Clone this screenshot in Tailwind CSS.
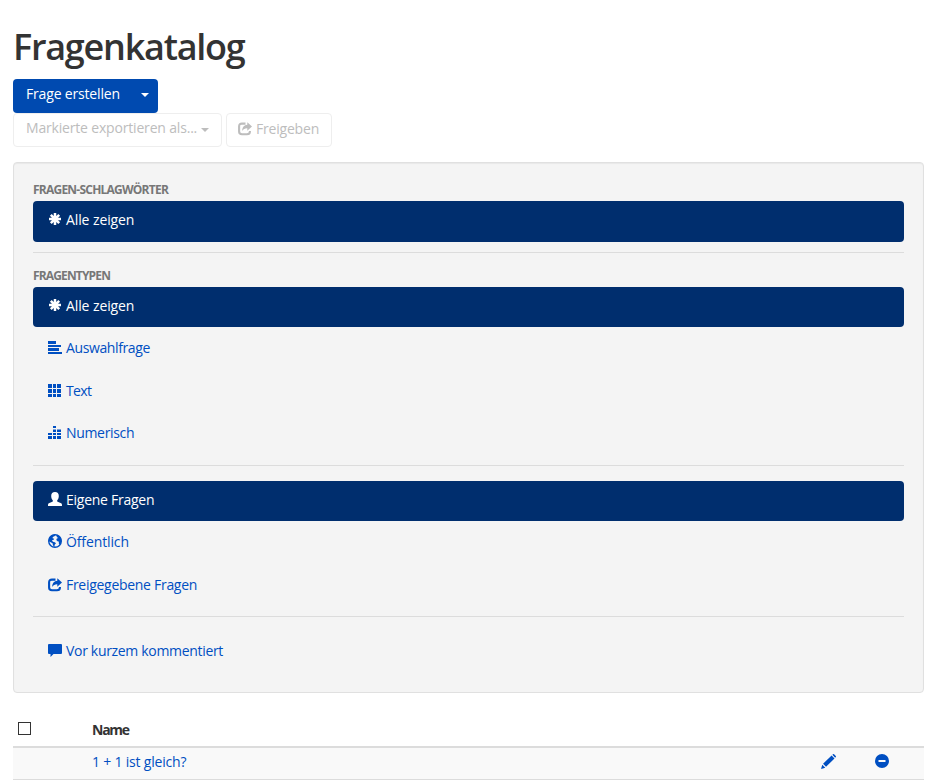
<!DOCTYPE html>
<html lang="de">
<head>
<meta charset="utf-8">
<title>Fragenkatalog</title>
<script src="https://cdn.jsdelivr.net/npm/@tailwindcss/browser@4"></script>
</head>
<body class="h-[784px] overflow-hidden bg-white pl-[13px] pr-[15px] font-['Open_Sans',sans-serif] text-sm leading-5 text-[#333]">
<svg class="hidden">
  <symbol id="asterisk" viewBox="0 0 14 14"><path stroke="currentColor" stroke-width="2.5" d="M7 1v12M1 7h12M2.8 2.8l8.4 8.4M11.200 2.8l-8.400 8.4"/></symbol>
  <symbol id="share" viewBox="0 0 14 14"><path fill="none" stroke="currentColor" stroke-width="2.100" d="M7.500 1.600H4Q1.100 1.600 1.100 4.500v5Q1.100 12.200 4 12.200h5Q11.900 12.200 11.900 9.700V9"/><path fill="currentColor" d="M9.300.3 14 4.500 9.300 8.700V6.300C7 6.200 5.400 7 4.200 9 4.200 5.500 6 3 9.300 2.800z"/></symbol>
  <symbol id="left" viewBox="0 0 14 14"><path fill="currentColor" d="M0 0h8v3H0zM0 4h13v2H0zM0 7h11v3H0zM0 11h14v2H0z"/></symbol>
  <symbol id="grid" viewBox="0 0 14 14"><path fill="currentColor" d="M0 0h4v4H0zM5 0h3v4H5zM9 0h4v4H9zM0 5h4v4H0zM5 5h3v4H5zM9 5h4v4H9zM0 10h4v3H0zM5 10h3v3H5zM9 10h4v3H9z"/></symbol>
  <symbol id="equalizer" viewBox="0 0 14 14"><path fill="currentColor" d="M5 0h3v2H5zM5 3.500h3v2.500H5zM5 7h3v2H5zM5 10h3v3H5zM0 7h4v2H0zM0 10h4v3H0zM9 3.500h4v2.500H9zM9 7h4v2H9zM9 10h4v3H9z"/></symbol>
  <symbol id="user" viewBox="0 0 14 14"><path fill="currentColor" d="M7 0C9.500 0 10.800 1.600 10.800 4c0 1.700-.6 3.300-1.600 4.300v1.200c1 .9 3.500 1.300 4.300 2 .4.400.5 1 .5 2.500H0c0-1.500.1-2.100.5-2.500.8-.7 3.300-1.100 4.300-2V8.300C3.800 7.300 3.200 5.700 3.200 4 3.200 1.600 4.500 0 7 0z"/></symbol>
  <symbol id="globe" viewBox="0 0 14 14"><circle cx="7" cy="7" r="6.300" fill="none" stroke="currentColor" stroke-width="1.400"/><path fill="currentColor" d="M.6 7C.6 3 3.500.6 7.500.6L6.500 2.300 4.800 3 4.600 4.200 6.200 4.800 5.600 5.800 3.800 6.600 5 7.700 6.800 8.200 8 9.300 6.700 10.800 6.400 13.300C5 12 4.800 10.300 4.400 9 3.500 8.800 2 8 .6 7zM9 .8l2.500 1.400L13.400 5l-.2 3.200-1.500 2.600-1-1.500.3-1.600L9.500 7.300 8.300 6l.5-1.600L10.300 4 8.600 3z"/></symbol>
  <symbol id="comment" viewBox="0 0 14 14"><path fill="currentColor" d="M1 0h12a1 1 0 0 1 1 1v8a1 1 0 0 1-1 1H5.500L2.500 13V10H1a1 1 0 0 1-1-1V1a1 1 0 0 1 1-1z"/></symbol>
  <symbol id="pencil" viewBox="0 0 14 14"><path fill="currentColor" d="m0 14 1.200-4 2.800 2.800zM1.900 9.200 9.900 1.400l2.700 2.700-7.900 7.900zM10.600.8l.6-.6q.5-.4 1 0l1.600 1.600q.4.500 0 1l-.6.600z"/></symbol>
  <symbol id="minus" viewBox="0 0 14 14"><path fill="currentColor" fill-rule="evenodd" d="M7 0a7 7 0 1 1 0 14A7 7 0 0 1 7 0zM3.500 6v2h7V6z"/></symbol>
</svg>

<h1 class="h-[79px] pt-[27px] text-[36px] leading-10 font-semibold tracking-[-1.25px]">Fragenkatalog</h1>

<div class="flex h-[34px] w-[145px] items-start rounded-[4px] bg-[#004ab0] pt-[5px] pl-[13px] text-white">
  <span class="w-[115px] tracking-[-0.17px]">Frage erstellen</span>
  <span class="mt-[9px] border-x-4 border-t-4 border-x-transparent border-t-white"></span>
</div>
<div class="flex gap-1 text-[#bdbdbd]">
  <div class="flex h-[34px] w-[209px] items-start rounded-[4px] border border-[#eee] pt-1 pl-3">
    <span class="w-[175px] whitespace-nowrap tracking-[-0.18px]">Markierte exportieren als...</span>
    <span class="mt-[10px] border-x-4 border-t-4 border-x-transparent border-t-[#bdbdbd]"></span>
  </div>
  <div class="flex h-[34px] w-[106px] items-start gap-1 rounded-[4px] border border-[#eee] pt-[5px] pl-[11px]">
    <svg class="mt-[3px] size-3.5"><use href="#share"/></svg><span class="tracking-[-0.2px]">Freigeben</span>
  </div>
</div>

<aside class="mt-[15px] h-[531px] rounded-[4px] border border-[#e0e0e0] bg-[#f4f4f4] px-[19px] pt-[17px] text-[#004fc2] shadow-[inset_0_1px_1px_rgba(0,0,0,0.05)]">
  <h2 class="h-[21px] text-xs leading-5 font-bold tracking-[-0.77px] text-[#777]">FRAGEN-SCHLAGWÖRTER</h2>
  <a class="flex h-[41px] items-start gap-1 rounded-[4px] bg-[#002e6e] pt-[9px] pl-[15px] text-white"><svg class="mt-[2px] size-3.5"><use href="#asterisk"/></svg><span class="tracking-[-0.1px]">Alle zeigen</span></a>
  <div class="mt-[10px] h-px bg-[#dcdcdc]"></div>
  <h2 class="mt-[13px] h-[21px] text-xs leading-5 font-bold tracking-[-0.85px] text-[#777]">FRAGENTYPEN</h2>
  <a class="flex h-10 items-start gap-1 rounded-[4px] bg-[#002e6e] pt-[9px] pl-[15px] text-white"><svg class="mt-[2px] size-3.5"><use href="#asterisk"/></svg><span class="tracking-[-0.1px]">Alle zeigen</span></a>
  <a class="flex h-[43px] items-start gap-1 pt-[11px] pl-[15px]"><svg class="mt-[3px] size-3.5"><use href="#left"/></svg><span class="tracking-[-0.38px]">Auswahlfrage</span></a>
  <a class="flex h-[42px] items-start gap-1 pt-[11px] pl-[15px]"><svg class="mt-[3px] size-3.5"><use href="#grid"/></svg><span class="tracking-[-0.6px]">Text</span></a>
  <a class="flex h-[43px] items-start gap-1 pt-[11px] pl-[15px]"><svg class="mt-[3px] size-3.5"><use href="#equalizer"/></svg><span class="tracking-[-0.33px]">Numerisch</span></a>
  <div class="mt-[10px] h-px bg-[#dcdcdc]"></div>
  <a class="mt-[15px] flex h-10 items-start gap-1 rounded-[4px] bg-[#002e6e] pt-[9px] pl-[15px] text-white"><svg class="mt-[2px] size-3.5"><use href="#user"/></svg><span class="tracking-[-0.26px]">Eigene Fragen</span></a>
  <a class="flex h-[43px] items-start gap-1 pt-[11px] pl-[15px]"><svg class="mt-[2px] size-3.5"><use href="#globe"/></svg><span class="tracking-[-0.12px]">Öffentlich</span></a>
  <a class="flex h-[42px] items-start gap-1 pt-[11px] pl-[15px]"><svg class="mt-[3px] size-3.5"><use href="#share"/></svg><span class="tracking-[-0.29px]">Freigegebene Fragen</span></a>
  <div class="mt-[10px] h-px bg-[#dcdcdc]"></div>
  <a class="mt-[15px] flex h-10 items-start gap-1 pt-[9px] pl-[15px]"><svg class="mt-[3px] size-3.5"><use href="#comment"/></svg><span class="tracking-[-0.32px]">Vor kurzem kommentiert</span></a>
</aside>

<div class="flex h-[55px] items-start border-b-2 border-[#dcdcdc] pl-[5px]">
  <span class="mt-[29px] size-[13px] border border-[#333] bg-white"></span>
  <span class="mt-[27px] ml-[61px] font-bold tracking-[-1.25px]">Name</span>
</div>
<div class="flex h-8 items-start border-b border-[#dcdcdc] bg-[#f9f9f9] pt-1 pl-[79px] text-[#004fc2]">
  <a class="w-[729px] tracking-[-0.2px]">1 + 1 ist gleich?</a>
  <svg class="mt-[2px] size-[15px]"><use href="#pencil"/></svg>
  <svg class="mt-[2px] ml-[39px] size-3.5"><use href="#minus"/></svg>
</div>
</body>
</html>
